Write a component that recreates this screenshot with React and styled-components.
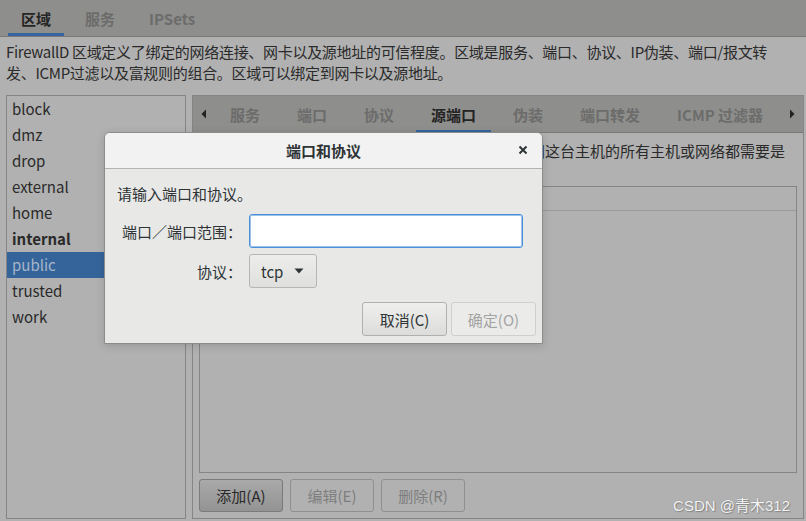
import React from "react";
import styled, { createGlobalStyle } from "styled-components";

const Global = createGlobalStyle`
  html, body { margin: 0; padding: 0; background: #b1b1b1; }
  body { font-family: "Noto Sans CJK SC", "Noto Sans", sans-serif; font-size: 15px; color: #2a2a2a; }
  * { box-sizing: border-box; }
`;

const Root = styled.div`
  position: relative;
  width: 806px;
  height: 521px;
  overflow: hidden;
  background: #b1b1b1;
`;

const TopBar = styled.div`
  display: flex;
  gap: 8px;
  height: 37px;
  padding-left: 8px;
  background: #8e8e8c;
  border-bottom: 1px solid #7a7a78;
`;

const TopTab = styled.div`
  display: flex;
  align-items: center;
  height: 36px;
  padding: 3px 13px 0;
  font-weight: bold;
  color: ${(p) => (p.$active ? "#252525" : "#6c6c6b")};
  border-bottom: 3px solid ${(p) => (p.$active ? "#3565a0" : "transparent")};
`;

const Desc = styled.div`
  padding: 4px 6px 0;
  line-height: 21px;
  height: 58px;
  letter-spacing: -0.3px;
  color: #2a2a2a;
`;

const Main = styled.div`
  display: flex;
  gap: 6px;
  padding: 0 2px 0 6px;
  height: 424px;
`;

const ZoneList = styled.div`
  width: 180px;
  border: 1px solid #858585;
  display: flex;
  flex-direction: column;
`;

const ZoneItem = styled.div`
  height: 26px;
  line-height: 26px;
  padding-left: 5px;
  font-weight: ${(p) => (p.$bold ? "bold" : "normal")};
  background: ${(p) => (p.$selected ? "#35649b" : "transparent")};
  color: ${(p) => (p.$selected ? "#a6b5c9" : "#2a2a2a")};
`;

const RightPanel = styled.div`
  flex: 1;
  border: 1px solid #858585;
  display: flex;
  flex-direction: column;
`;

const NoteHeader = styled.div`
  display: flex;
  align-items: stretch;
  height: 37px;
  background: #8e8e8c;
  border-bottom: 1px solid #7a7a78;
`;

const Arrow = styled.div`
  width: ${(p) => p.$w}px;
  display: flex;
  align-items: center;
  justify-content: center;
  svg { display: block; }
`;

const NoteTabs = styled.div`
  display: flex;
  gap: 7px;
  flex: 1;
`;

const NoteTab = styled.div`
  display: flex;
  align-items: center;
  padding: 2px 15px 0;
  font-weight: bold;
  white-space: nowrap;
  color: ${(p) => (p.$active ? "#232323" : "#6c6c6b")};
  border-bottom: 2px solid ${(p) => (p.$active ? "#3565a0" : "transparent")};
`;

const PanelBody = styled.div`
  flex: 1;
  display: flex;
  flex-direction: column;
  padding: 7px 6px 6px;
`;

const Hint = styled.div`
  line-height: 21px;
  padding-left: 1px;
  margin-bottom: 4px;
  white-space: nowrap;
`;

const ListBox = styled.div`
  flex: 1;
  border: 1px solid #858585;
`;

const ListHead = styled.div`
  height: 24px;
  border-bottom: 1px solid #9a9a9a;
`;

const ButtonRow = styled.div`
  display: flex;
  gap: 7px;
  margin-top: 6px;
`;

const PanelButton = styled.div`
  width: 84px;
  height: 33px;
  display: flex;
  align-items: center;
  justify-content: center;
  border: 1px solid ${(p) => (p.$disabled ? "#8f8f8f" : "#7a7a7a")};
  border-radius: 3px;
  background: ${(p) =>
    p.$disabled ? "#b1b1b1" : "linear-gradient(#a9a9a9, #939393)"};
  color: ${(p) => (p.$disabled ? "#7e7e7e" : "#2a2a2a")};
`;

const Dialog = styled.div`
  position: absolute;
  left: 104px;
  top: 132px;
  width: 439px;
  height: 212px;
  border: 1px solid #8c8c8a;
  border-radius: 6px 6px 0 0;
  background: #e8e8e7;
  box-shadow: 0 2px 8px rgba(0, 0, 0, 0.15);
  display: flex;
  flex-direction: column;
  overflow: hidden;
`;

const TitleBar = styled.div`
  position: relative;
  height: 36px;
  background: #f2f2f2;
  border-bottom: 1px solid #b4b4b1;
  display: flex;
  align-items: center;
  justify-content: center;
  font-weight: bold;
  color: #2e3436;
`;

const Close = styled.div`
  position: absolute;
  right: 14px;
  top: 12px;
  svg { display: block; }
`;

const DialogBody = styled.div`
  flex: 1;
  padding: 14px 6px 6px 12px;
  display: flex;
  flex-direction: column;
  color: #2e3436;
`;

const Intro = styled.div`
  line-height: 21px;
  margin-bottom: 10px;
`;

const Form = styled.div`
  display: grid;
  grid-template-columns: 125px 274px;
  column-gap: 7px;
  row-gap: 6px;
  align-items: center;
`;

const Label = styled.div`
  text-align: right;
  white-space: nowrap;
`;

const Input = styled.div`
  height: 34px;
  background: #ffffff;
  border: 1px solid #4a90d9;
  box-shadow: inset 0 0 0 1px rgba(74, 144, 217, 0.55);
  border-radius: 3px;
`;

const Combo = styled.div`
  width: 68px;
  height: 34px;
  display: flex;
  align-items: center;
  justify-content: space-between;
  padding: 0 12px 0 11px;
  border: 1px solid #b6b6b3;
  border-radius: 3px;
  background: linear-gradient(#ededeb, #dfdfdd);
`;

const DialogButtons = styled.div`
  display: flex;
  justify-content: flex-end;
  gap: 4px;
  margin-top: 14px;
`;

const DlgButton = styled.div`
  width: 85px;
  height: 34px;
  display: flex;
  align-items: center;
  justify-content: center;
  border: 1px solid ${(p) => (p.$disabled ? "#cfcfcd" : "#b0b0ad")};
  border-radius: 3px;
  background: ${(p) =>
    p.$disabled ? "#ebebea" : "linear-gradient(#efefed, #dcdcda)"};
  color: ${(p) => (p.$disabled ? "#a3a3a3" : "#2e3436")};
`;

const Watermark = styled.div`
  position: absolute;
  right: 16px;
  bottom: 6px;
  font-size: 15px;
  color: #f4f4f4;
  text-shadow: 0 0 1px #7a7a7a, 1px 1px 1px rgba(0, 0, 0, 0.25);
  font-family: "Liberation Sans", "Noto Sans CJK SC", sans-serif;
`;

const zones = ["block", "dmz", "drop", "external", "home", "internal", "public", "trusted", "work"];
const tabs = ["服务", "端口", "协议", "源端口", "伪装", "端口转发", "ICMP 过滤器"];

export default function App() {
  return (
    <Root>
      <Global />
      <TopBar>
        <TopTab $active>区域</TopTab>
        <TopTab>服务</TopTab>
        <TopTab>IPSets</TopTab>
      </TopBar>
      <Desc>
        FirewallD 区域定义了绑定的网络连接、网卡以及源地址的可信程度。区域是服务、端口、协议、IP伪装、端口/报文转
        <br />
        发、ICMP过滤以及富规则的组合。区域可以绑定到网卡以及源地址。
      </Desc>
      <Main>
        <ZoneList>
          {zones.map((z) => (
            <ZoneItem key={z} $bold={z === "internal"} $selected={z === "public"}>
              {z}
            </ZoneItem>
          ))}
        </ZoneList>
        <RightPanel>
          <NoteHeader>
            <Arrow $w={22}>
              <svg width="6" height="10" viewBox="0 0 6 10">
                <path d="M5 0.5 L0.5 5 L5 9.5 Z" fill="#222" />
              </svg>
            </Arrow>
            <NoteTabs>
              {tabs.map((t) => (
                <NoteTab key={t} $active={t === "源端口"}>
                  {t}
                </NoteTab>
              ))}
            </NoteTabs>
            <Arrow $w={22}>
              <svg width="6" height="10" viewBox="0 0 6 10">
                <path d="M1 0.5 L5.5 5 L1 9.5 Z" fill="#222" />
              </svg>
            </Arrow>
          </NoteHeader>
          <PanelBody>
            <Hint>
              添加额外的源端口或者端口范围，它们对于允许访问这台主机的所有主机或网络都需要是
              <br />
              可以访问的。
            </Hint>
            <ListBox>
              <ListHead />
            </ListBox>
            <ButtonRow>
              <PanelButton>添加(A)</PanelButton>
              <PanelButton $disabled>编辑(E)</PanelButton>
              <PanelButton $disabled>删除(R)</PanelButton>
            </ButtonRow>
          </PanelBody>
        </RightPanel>
      </Main>

      <Dialog>
        <TitleBar>
          端口和协议
          <Close>
            <svg width="10" height="10" viewBox="0 0 10 10">
              <path d="M1.5 1.5 L8.5 8.5 M8.5 1.5 L1.5 8.5" stroke="#2e3436" strokeWidth="2" />
            </svg>
          </Close>
        </TitleBar>
        <DialogBody>
          <Intro>请输入端口和协议。</Intro>
          <Form>
            <Label>端口／端口范围：</Label>
            <Input />
            <Label>协议：</Label>
            <Combo>
              <span>tcp</span>
              <svg width="10" height="6" viewBox="0 0 10 6">
                <path d="M0.5 0.5 L9.5 0.5 L5 5.5 Z" fill="#2e3436" />
              </svg>
            </Combo>
          </Form>
          <DialogButtons>
            <DlgButton>取消(C)</DlgButton>
            <DlgButton $disabled>确定(O)</DlgButton>
          </DialogButtons>
        </DialogBody>
      </Dialog>

      <Watermark>CSDN @青木312</Watermark>
    </Root>
  );
}
